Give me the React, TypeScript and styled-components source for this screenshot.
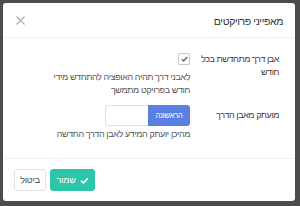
import React from "react";
import styled, { createGlobalStyle } from "styled-components";

const GlobalStyle = createGlobalStyle`
	html, body {
		margin: 0;
		padding: 0;
		background: #4d4d4d;
	}
	* {
		box-sizing: border-box;
	}
`;

const App = () => {
	return (
		<>
			<GlobalStyle />
			<Page>
				<Modal dir="rtl">
					<Header>
						<Title>מאפייני פרויקטים</Title>
						<Close aria-label="close">
							<svg width="9" height="9" viewBox="0 0 9 9">
								<path d="M0.5 0.5 L8.5 8.5 M8.5 0.5 L0.5 8.5" stroke="#aaa" strokeWidth="1.1" />
							</svg>
						</Close>
					</Header>

					<Body>
						<Row>
							<Label>אבן דרך מתחדשת בכל חודש</Label>
							<Control>
								<Check>
									<svg width="7" height="6" viewBox="0 0 7 6">
										<path d="M0.8 3.2 L2.7 5 L6.2 1" stroke="#555" strokeWidth="1.2" fill="none" />
									</svg>
								</Check>
								<Help>לאבני דרך תהיה האופציה להתחדש מידי חודש בפרויקט מתמשך</Help>
							</Control>
						</Row>

						<Row $center>
							<Label>מועתק מאבן הדרך</Label>
							<Control>
								<InputGroup>
									<Addon>הראשונה</Addon>
									<Input />
								</InputGroup>
							</Control>
						</Row>
						<HelpRow>
							<Help $wide>מהיכן יועתק המידע לאבן הדרך החדשה</Help>
						</HelpRow>
					</Body>

					<Footer>
						<Button $primary>
							<svg width="9" height="7" viewBox="0 0 10 8">
								<path d="M1 4.2 L3.7 6.8 L9 1.4" stroke="#fff" strokeWidth="1.9" fill="none" />
							</svg>
							שמור
						</Button>
						<Button>ביטול</Button>
					</Footer>
				</Modal>
			</Page>
		</>
	);
};

export default App;

const Page = styled.div`
	width: 300px;
	height: 206px;
	padding: 3px 0 0 3px;
	font-family: "Liberation Sans", "DejaVu Sans", sans-serif;
`;

const Modal = styled.div`
	width: 292px;
	height: 198px;
	background: #fff;
	border-radius: 3px;
	display: flex;
	flex-direction: column;
`;

const Header = styled.div`
	height: 35px;
	display: flex;
	align-items: center;
	justify-content: space-between;
	padding: 0 12px 0 13px;
	border-bottom: 1px solid #f0f0f0;
`;

const Title = styled.div`
	font-size: 10.5px;
	letter-spacing: -0.4px;
	color: #333;
	padding-top: 1px;
`;

const Close = styled.div`
	display: flex;
	align-items: center;
	padding-top: 1px;
`;

const Body = styled.div`
	flex: 1;
	padding: 15px 15px 0 15px;
	border-bottom: 1px solid #f0f0f0;
`;

const Row = styled.div<{ $center?: boolean }>`
	display: grid;
	grid-template-columns: 88px 1fr;
	column-gap: 2px;
	align-items: ${(p) => (p.$center ? "center" : "start")};
	margin-bottom: ${(p) => (p.$center ? "2px" : "8px")};
`;

const Label = styled.div`
	font-size: 9px;
	letter-spacing: -0.45px;
	line-height: 13px;
	color: #3a3a3a;
	padding-right: 1px;
`;

const Control = styled.div`
	display: flex;
	flex-direction: column;
	align-items: flex-start;
`;

const Check = styled.div`
	width: 12px;
	height: 12px;
	border: 1px solid #c8c8c8;
	border-radius: 2px;
	display: flex;
	align-items: center;
	justify-content: center;
	margin-bottom: 6px;
`;

const Help = styled.div<{ $wide?: boolean }>`
	font-size: 9px;
	letter-spacing: -0.4px;
	line-height: 13px;
	color: #555;
	max-width: ${(p) => (p.$wide ? "none" : "142px")};
`;

const HelpRow = styled.div`
	padding-right: 90px;
`;

const InputGroup = styled.div`
	display: flex;
	height: 21px;
`;

const Addon = styled.div`
	width: 42px;
	background: #5a7fe2;
	color: #fff;
	font-size: 7.5px;
	letter-spacing: -0.2px;
	display: flex;
	align-items: center;
	justify-content: center;
	border-radius: 0 3px 3px 0;
`;

const Input = styled.div`
	width: 43px;
	border: 1px solid #e0e0e0;
	border-right: none;
	border-radius: 3px 0 0 3px;
	background: #fff;
`;

const Footer = styled.div`
	height: 42px;
	display: flex;
	align-items: center;
	justify-content: flex-end;
	gap: 4px;
	padding: 0 11px;
	direction: ltr;
	flex-direction: row-reverse;
`;

const Button = styled.div<{ $primary?: boolean }>`
	height: 22px;
	width: ${(p) => (p.$primary ? "45px" : "32px")};
	display: flex;
	align-items: center;
	justify-content: center;
	gap: 4px;
	direction: rtl;
	font-size: 9px;
	letter-spacing: -0.2px;
	border-radius: 3px;
	color: ${(p) => (p.$primary ? "#fff" : "#444")};
	background: ${(p) => (p.$primary ? "#2cc5a9" : "#fff")};
	border: 1px solid ${(p) => (p.$primary ? "#2cc5a9" : "#e2e2e2")};

	svg {
		flex-shrink: 0;
	}
`;
